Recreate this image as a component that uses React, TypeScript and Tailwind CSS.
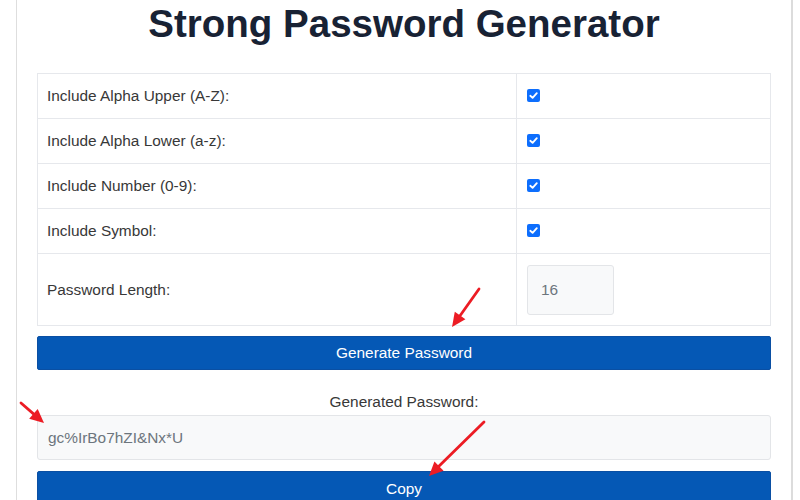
import React from "react";

const font = { fontFamily: '"Liberation Sans", Arial, sans-serif' };

function Check() {
  return (
    <span className="inline-flex w-[13px] h-[13px] rounded-[2px] bg-[#0d6efd] items-center justify-center">
      <svg width="11" height="11" viewBox="0 0 12 12">
        <path d="M2.5 6.3 L5 8.6 L9.6 3.4" fill="none" stroke="white" strokeWidth="2" strokeLinecap="round" strokeLinejoin="round" />
      </svg>
    </span>
  );
}

function Arrow({ x1, y1, x2, y2 }: { x1: number; y1: number; x2: number; y2: number }) {
  const dx = x2 - x1;
  const dy = y2 - y1;
  const len = Math.sqrt(dx * dx + dy * dy);
  const ux = dx / len;
  const uy = dy / len;
  const hl = 14;
  const hw = 6.5;
  const bx = x2 - ux * hl;
  const by = y2 - uy * hl;
  const px = -uy;
  const py = ux;
  const pts = `${x2},${y2} ${bx + px * hw},${by + py * hw} ${bx - px * hw},${by - py * hw}`;
  return (
    <g>
      <line x1={x1} y1={y1} x2={bx + ux * 2} y2={by + uy * 2} stroke="#ec1c24" strokeWidth="2.8" strokeLinecap="round" />
      <polygon points={pts} fill="#ec1c24" />
    </g>
  );
}

const rows = [
  "Include Alpha Upper (A-Z):",
  "Include Alpha Lower (a-z):",
  "Include Number (0-9):",
  "Include Symbol:",
];

export default function App() {
  return (
    <div className="relative w-[800px] h-[500px] overflow-hidden bg-white" style={font}>
      <div className="ml-[16px] w-[777px] h-[500px] border-l border-r-2 border-l-[#dedede] border-r-[#dcdcdc] px-[20px]">
        <h1 className="h-[48px] leading-[48px] text-center text-[38.5px] font-bold text-[#182234]">
          Strong Password Generator
        </h1>
        <div className="mt-[25px] border border-[#e6e8ec] text-[15.4px] text-[#383838]">
          {rows.map((r) => (
            <div key={r} className="grid grid-cols-[479px_1fr] border-b border-[#e6e8ec] h-[45px]">
              <div className="flex items-center pl-[9px] border-r border-[#e6e8ec]">{r}</div>
              <div className="flex items-center pl-[10px] pb-[2px]">
                <Check />
              </div>
            </div>
          ))}
          <div className="grid grid-cols-[479px_1fr] h-[71px]">
            <div className="flex items-center pl-[9px] border-r border-[#e6e8ec]">Password Length:</div>
            <div className="flex items-center pl-[10px]">
              <div className="w-[87px] h-[50px] bg-[#f8f9fa] border border-[#e3e5e8] rounded-[3px] flex items-center pl-[13px] text-[#6c757d]">
                16
              </div>
            </div>
          </div>
        </div>
        <button className="mt-[10px] w-full h-[34px] bg-[#0558b5] border border-[#0a4fa3] rounded-[2px] text-white text-[15.4px] flex items-center justify-center">
          Generate Password
        </button>
        <div className="mt-[22px] h-[20px] leading-[20px] text-center text-[15.4px] text-[#383838]">Generated Password:</div>
        <div className="mt-[3px] h-[45px] bg-[#f8f9fa] border border-[#e3e5e8] rounded-[3px] flex items-center pl-[10px] text-[15.4px] text-[#6c757d]">
          gc%IrBo7hZI&amp;Nx*U
        </div>
        <button className="mt-[11px] w-full h-[36px] bg-[#0558b5] border border-[#0a4fa3] rounded-[2px] text-white text-[15.4px] flex items-center justify-center">
          Copy
        </button>
      </div>
      <svg className="absolute left-0 top-0 pointer-events-none" width="800" height="500">
        <Arrow x1={479} y1={289} x2={452} y2={327} />
        <Arrow x1={21} y1={403} x2={44} y2={423} />
        <Arrow x1={484} y1={422} x2={429} y2={476} />
      </svg>
    </div>
  );
}
